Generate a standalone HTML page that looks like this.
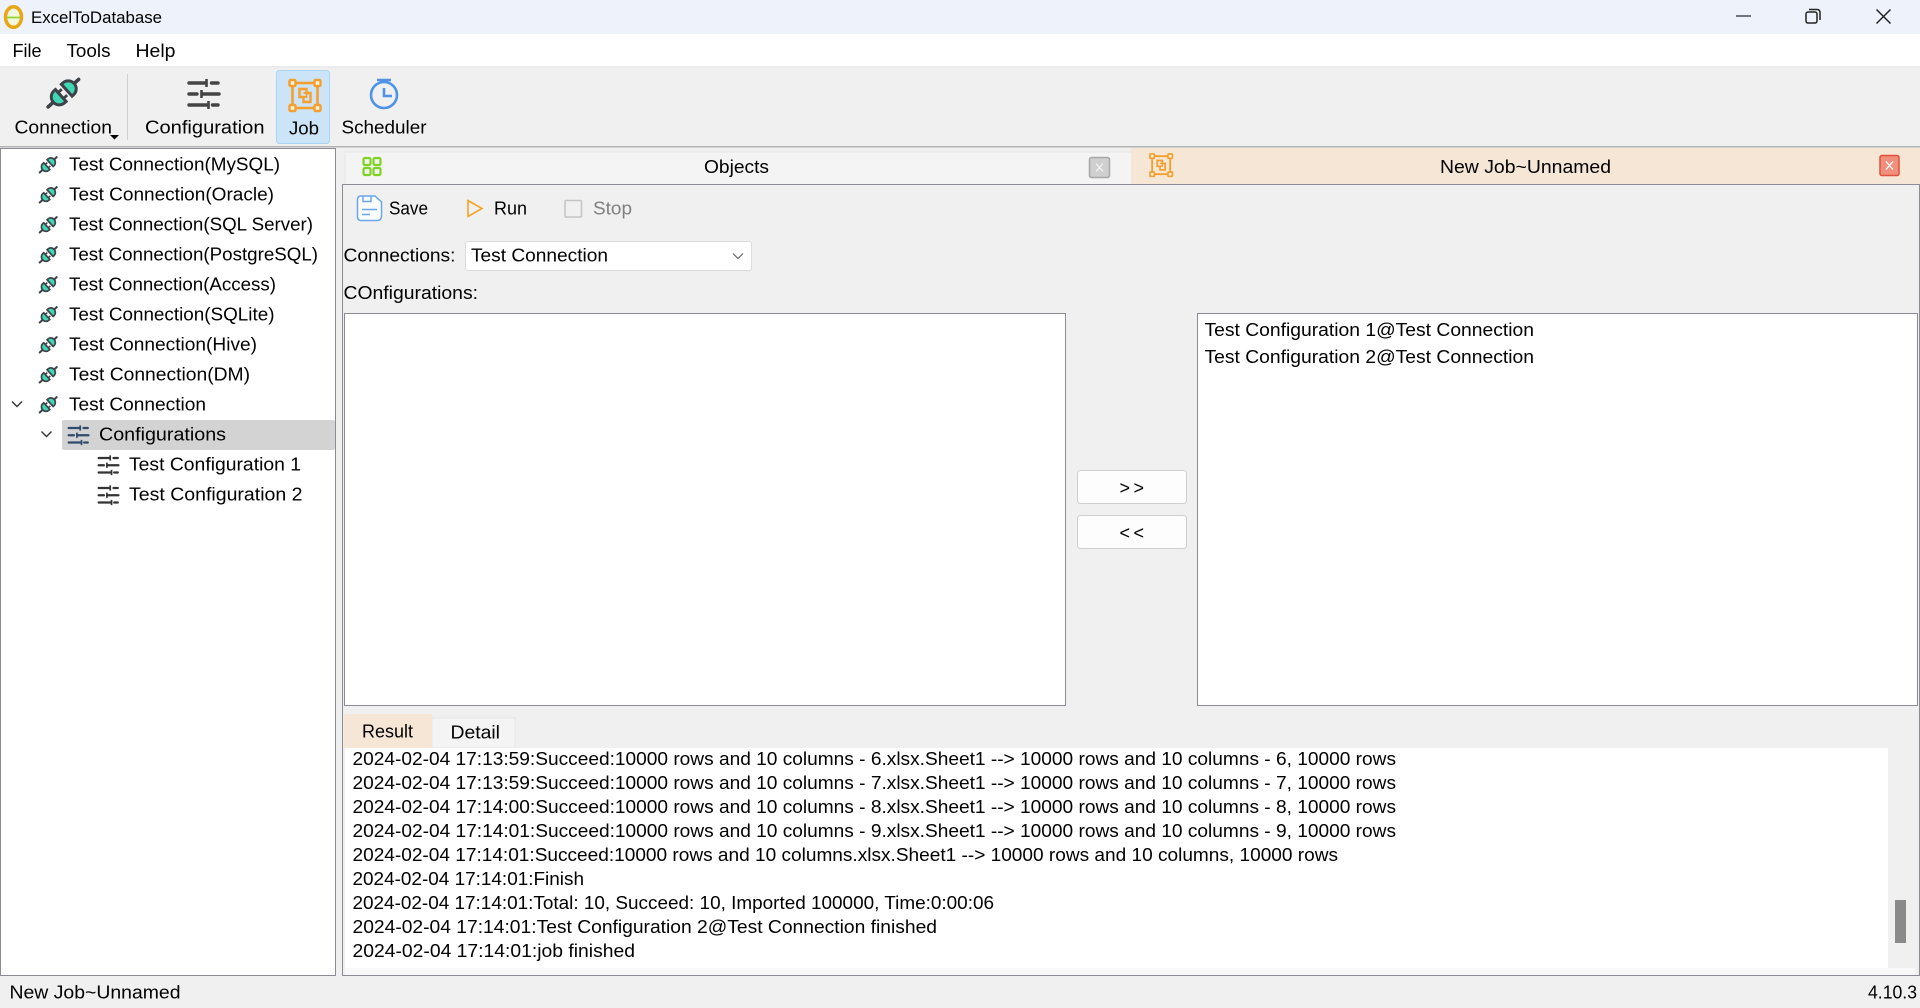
<!DOCTYPE html>
<html lang="en"><head><meta charset="utf-8"><title>ExcelToDatabase</title>
<style>
html,body{margin:0;padding:0;width:1920px;height:1008px;overflow:hidden;background:#f0f0f0}
svg{display:block}
text{font-family:"Liberation Sans",sans-serif;font-size:18px;fill:#000}
</style></head><body>
<svg xmlns="http://www.w3.org/2000/svg" width="1920" height="1008" viewBox="0 0 1920 1008">
<defs>
<g id="plug" transform="rotate(-42)">
<path d="M-20 0H-12M14 0H21" stroke="#3c4248" stroke-width="3.600" fill="none" stroke-linecap="round"/>
<path d="M-3-8V8H-5A8 8 0 0 1-5-8Z" fill="#3fd6b4" stroke="#3c4248" stroke-width="3"/>
<path d="M5-8V8H7A8 8 0 0 0 7-8Z" fill="#3fd6b4" stroke="#3c4248" stroke-width="3"/>
<path d="M-3-4H2M-3 4H2" stroke="#3c4248" stroke-width="2.800"/>
</g>
<g id="sliders" fill="none" stroke-width="3.400">
<path d="M1 3H18M23.500 3H30M1 14H9M14 14H31M1 25H20M24.500 25H30" stroke-linecap="round"/>
<path d="M18.500 -1V7M13.500 10V18M20.500 21V29" stroke-width="2.600"/>
</g>
<g id="job" fill="none" stroke="#f5a02e">
<rect x="3" y="3" width="25" height="25" stroke-width="2.600"/>
<g fill="#fdf3e3" stroke-width="2.400"><rect x="0" y="0" width="6" height="6" rx="1"/><rect x="25" y="0" width="6" height="6" rx="1"/><rect x="0" y="25" width="6" height="6" rx="1"/><rect x="25" y="25" width="6" height="6" rx="1"/></g>
<path d="M10 9H17V13H21V22H14V17H10Z" stroke-width="2.400"/>
<path d="M14 13H17V17H14" stroke-width="1.800"/>
</g>
<g id="chev"><path d="M-5-2.500 L0 2.500 L5-2.500" fill="none" stroke="#333" stroke-width="1.400"/></g>
</defs>

<!-- title bar -->
<rect width="1920" height="34" fill="#eef2fa"/>
<ellipse cx="13.500" cy="17" rx="8" ry="10.300" fill="#f4f7e0" stroke="#e8a515" stroke-width="3.500"/>
<path d="M7 17.500H20" stroke="#8fd82f" stroke-width="1.800"/>
<text x="31" y="23" textLength="131" lengthAdjust="spacingAndGlyphs" style="font-size:17px">ExcelToDatabase</text>
<path d="M1736 16H1751" stroke="#222" stroke-width="1.200"/>
<g fill="none" stroke="#222" stroke-width="1.500"><rect x="1806" y="12" width="11" height="11" rx="2"/><path d="M1809 9.500H1817Q1820 9.500 1820 12.500V20"/></g>
<path d="M1876.500 9.500L1890.500 23.500M1890.500 9.500L1876.500 23.500" stroke="#222" stroke-width="1.500"/>

<!-- menu -->
<rect y="34" width="1920" height="32" fill="#fff"/>
<rect y="66" width="1920" height="2" fill="#ececec"/>
<text x="12.500" y="57" textLength="29" lengthAdjust="spacingAndGlyphs">File</text>
<text x="66.500" y="57" textLength="44" lengthAdjust="spacingAndGlyphs">Tools</text>
<text x="135.500" y="57" textLength="40" lengthAdjust="spacingAndGlyphs">Help</text>

<!-- toolbar -->
<rect y="68" width="1920" height="78" fill="#f0f0f0"/>
<rect x="127" y="74" width="1" height="66" fill="#d0d0d0"/>
<rect x="276.500" y="70.500" width="53" height="73" rx="3" fill="#cce4f7" stroke="#a8d4f5"/>
<use href="#plug" transform="translate(63 93.500)"/>
<use href="#sliders" transform="translate(188 80)" stroke="#444"/>
<use href="#job" transform="translate(289.500 80)"/>
<g fill="none" stroke="#4f93e6" stroke-width="2.600"><circle cx="384" cy="95" r="13"/><path d="M377 80H391M384 80V82M384 88V96H392"/></g>
<text x="14.500" y="133.500" textLength="97.500" lengthAdjust="spacingAndGlyphs">Connection</text>
<path d="M110 135H119L114.500 139.500Z" fill="#000"/>
<text x="145" y="133.500" textLength="119.500" lengthAdjust="spacingAndGlyphs">Configuration</text>
<text x="289" y="134.500" textLength="30" lengthAdjust="spacingAndGlyphs">Job</text>
<text x="341.500" y="133.500" textLength="85" lengthAdjust="spacingAndGlyphs">Scheduler</text>
<rect y="146" width="1920" height="1.500" fill="#b4b4b4"/>

<!-- tree -->
<rect x=".5" y="148.500" width="335" height="827" fill="#fff" stroke="#8c8c94"/>
<rect x="62" y="420" width="273" height="30" rx="2" fill="#d3d3d3"/>
<use href="#plug" transform="translate(48 165) scale(.56)"/>
<use href="#plug" transform="translate(48 195) scale(.56)"/>
<use href="#plug" transform="translate(48 225) scale(.56)"/>
<use href="#plug" transform="translate(48 255) scale(.56)"/>
<use href="#plug" transform="translate(48 285) scale(.56)"/>
<use href="#plug" transform="translate(48 315) scale(.56)"/>
<use href="#plug" transform="translate(48 345) scale(.56)"/>
<use href="#plug" transform="translate(48 375) scale(.56)"/>
<use href="#plug" transform="translate(48 405) scale(.56)"/>
<text x="69" y="170.500" textLength="211" lengthAdjust="spacingAndGlyphs">Test Connection(MySQL)</text>
<text x="69" y="200.500" textLength="205" lengthAdjust="spacingAndGlyphs">Test Connection(Oracle)</text>
<text x="69" y="230.500" textLength="244" lengthAdjust="spacingAndGlyphs">Test Connection(SQL Server)</text>
<text x="69" y="260.500" textLength="249" lengthAdjust="spacingAndGlyphs">Test Connection(PostgreSQL)</text>
<text x="69" y="290.500" textLength="207" lengthAdjust="spacingAndGlyphs">Test Connection(Access)</text>
<text x="69" y="320.500" textLength="205.500" lengthAdjust="spacingAndGlyphs">Test Connection(SQLite)</text>
<text x="69" y="350.500" textLength="188" lengthAdjust="spacingAndGlyphs">Test Connection(Hive)</text>
<text x="69" y="380.500" textLength="181" lengthAdjust="spacingAndGlyphs">Test Connection(DM)</text>
<text x="69" y="410.500" textLength="137" lengthAdjust="spacingAndGlyphs">Test Connection</text>
<use href="#chev" transform="translate(17 404)"/>
<use href="#chev" transform="translate(46.500 434)"/>
<use href="#sliders" transform="translate(68 426) scale(.66)" stroke="#2f4b6b"/>
<text x="99" y="440.500" textLength="127" lengthAdjust="spacingAndGlyphs">Configurations</text>
<use href="#sliders" transform="translate(98 456) scale(.66)" stroke="#333"/>
<text x="129" y="470.500" textLength="172" lengthAdjust="spacingAndGlyphs">Test Configuration 1</text>
<use href="#sliders" transform="translate(98 486) scale(.66)" stroke="#333"/>
<text x="129" y="500.500" textLength="173.500" lengthAdjust="spacingAndGlyphs">Test Configuration 2</text>

<!-- document tabs -->
<rect x="345" y="152" width="786" height="32" fill="#f4f4f4"/>
<path d="M345 184V152H1131" fill="none" stroke="#e6e6e6"/>
<rect x="1131" y="148" width="789" height="36" fill="#f5e6d6"/>
<g fill="none" stroke="#7ed321" stroke-width="2.200"><rect x="363.500" y="158" width="7" height="7" rx="1.500"/><rect x="373.500" y="158" width="7" height="7" rx="1.500"/><rect x="363.500" y="168" width="7" height="7" rx="1.500"/><rect x="373.500" y="168" width="7" height="7" rx="1.500"/></g>
<text x="704" y="173" textLength="65" lengthAdjust="spacingAndGlyphs">Objects</text>
<rect x="1089.500" y="157.500" width="20" height="20" rx="2" fill="#cfcfcf" stroke="#a8a8a8" stroke-width="1.500"/>
<path d="M1096 163.500L1103 171.500M1103 163.500L1096 171.500" stroke="#f4f4f4" stroke-width="1.300"/>
<use href="#job" transform="translate(1150 154) scale(.72)"/>
<text x="1440" y="173" textLength="171" lengthAdjust="spacingAndGlyphs">New Job~Unnamed</text>
<rect x="1880" y="155.500" width="19" height="20" rx="2" fill="#f0907c" stroke="#e0503c" stroke-width="1.500"/>
<path d="M1886 161.500L1893 169.500M1893 161.500L1886 169.500" stroke="#fff" stroke-width="1.300"/>

<!-- content panel -->
<rect x="342.500" y="184.500" width="1577" height="791" fill="#f0f0f0" stroke="#8c8c94"/>

<!-- job toolbar -->
<path d="M361 196H375L381.500 202V216Q381.500 220.500 377 220.500H361Q357.500 220.500 357.500 217V199.500Q357.500 196 361 196Z" fill="#fbfdff" stroke="#6aa5ee" stroke-width="1.500"/>
<path d="M363 196V201.500H371V196M362 209.500H377M362 214.500H370" fill="none" stroke="#6aa5ee" stroke-width="1.500"/>
<text x="389" y="214.500" textLength="39" lengthAdjust="spacingAndGlyphs">Save</text>
<path d="M468 200.500L482 208.500L468 216.500Z" fill="none" stroke="#f5a623" stroke-width="1.600"/>
<text x="494" y="214.500" textLength="33" lengthAdjust="spacingAndGlyphs">Run</text>
<rect x="565" y="200.500" width="16.500" height="16.500" rx="1" fill="#f0f0f0" stroke="#c4c4c4" stroke-width="1.500"/>
<text x="593" y="214.500" textLength="39" lengthAdjust="spacingAndGlyphs" style="fill:#808080">Stop</text>

<!-- connections -->
<text x="343.500" y="261.500" textLength="112" lengthAdjust="spacingAndGlyphs">Connections:</text>
<rect x="465.500" y="241.500" width="286" height="29" rx="2" fill="#fff" stroke="#dcdcdc"/>
<text x="471" y="261.500" textLength="137" lengthAdjust="spacingAndGlyphs">Test Connection</text>
<path d="M733 253.500L738 258.500L743 253.500" fill="none" stroke="#666" stroke-width="1.200"/>
<text x="343.500" y="299" textLength="134.500" lengthAdjust="spacingAndGlyphs">COnfigurations:</text>

<!-- lists -->
<rect x="344.500" y="313.500" width="721" height="392" fill="#fff" stroke="#8c8c94"/>
<rect x="1197.500" y="313.500" width="720" height="392" fill="#fff" stroke="#8c8c94"/>
<text x="1204.500" y="336" textLength="329.500" lengthAdjust="spacingAndGlyphs">Test Configuration 1@Test Connection</text>
<text x="1204.500" y="363" textLength="329.500" lengthAdjust="spacingAndGlyphs">Test Configuration 2@Test Connection</text>
<rect x="1077.500" y="470.500" width="109" height="33" rx="3" fill="#fdfdfd" stroke="#cfcfcf"/>
<rect x="1077.500" y="515.500" width="109" height="33" rx="3" fill="#fdfdfd" stroke="#cfcfcf"/>
<text x="1119.500" y="494" textLength="24.500" lengthAdjust="spacing" style="font-size:18px">&gt; &gt;</text>
<text x="1119.500" y="539" textLength="24.500" lengthAdjust="spacing" style="font-size:18px">&lt; &lt;</text>

<!-- result tabs -->
<rect x="432" y="718" width="83" height="30" fill="#f4f4f4" stroke="#e6e6e6"/>
<rect x="344" y="714" width="88" height="34" fill="#f5e6d6"/>
<text x="362" y="737.500" textLength="51" lengthAdjust="spacingAndGlyphs">Result</text>
<text x="450.500" y="738.500" textLength="49.500" lengthAdjust="spacingAndGlyphs">Detail</text>

<!-- log -->
<rect x="345" y="748" width="1543" height="220" fill="#fff"/>
<rect x="345" y="968" width="1570" height="7" fill="#f8f8f8"/>
<rect x="1888" y="748" width="25" height="220" fill="#f0f0f0"/>
<rect x="1895" y="900" width="11" height="43" fill="#8a8a8a"/>
<text x="352.500" y="765" textLength="1043.500" lengthAdjust="spacingAndGlyphs">2024-02-04 17:13:59:Succeed:10000 rows and 10 columns - 6.xlsx.Sheet1 --&gt; 10000 rows and 10 columns - 6, 10000 rows</text>
<text x="352.500" y="789" textLength="1043.500" lengthAdjust="spacingAndGlyphs">2024-02-04 17:13:59:Succeed:10000 rows and 10 columns - 7.xlsx.Sheet1 --&gt; 10000 rows and 10 columns - 7, 10000 rows</text>
<text x="352.500" y="813" textLength="1043.500" lengthAdjust="spacingAndGlyphs">2024-02-04 17:14:00:Succeed:10000 rows and 10 columns - 8.xlsx.Sheet1 --&gt; 10000 rows and 10 columns - 8, 10000 rows</text>
<text x="352.500" y="837" textLength="1043.500" lengthAdjust="spacingAndGlyphs">2024-02-04 17:14:01:Succeed:10000 rows and 10 columns - 9.xlsx.Sheet1 --&gt; 10000 rows and 10 columns - 9, 10000 rows</text>
<text x="352.500" y="861" textLength="985.500" lengthAdjust="spacingAndGlyphs">2024-02-04 17:14:01:Succeed:10000 rows and 10 columns.xlsx.Sheet1 --&gt; 10000 rows and 10 columns, 10000 rows</text>
<text x="352.500" y="885" textLength="231.500" lengthAdjust="spacingAndGlyphs">2024-02-04 17:14:01:Finish</text>
<text x="352.500" y="909" textLength="641.500" lengthAdjust="spacingAndGlyphs">2024-02-04 17:14:01:Total: 10, Succeed: 10, Imported 100000, Time:0:00:06</text>
<text x="352.500" y="933" textLength="584.500" lengthAdjust="spacingAndGlyphs">2024-02-04 17:14:01:Test Configuration 2@Test Connection finished</text>
<text x="352.500" y="957" textLength="282.500" lengthAdjust="spacingAndGlyphs">2024-02-04 17:14:01:job finished</text>

<!-- status bar -->
<text x="9.500" y="998.500" textLength="171" lengthAdjust="spacingAndGlyphs">New Job~Unnamed</text>
<text x="1868" y="998.500" textLength="49" lengthAdjust="spacingAndGlyphs">4.10.3</text>
</svg>
</body></html>
